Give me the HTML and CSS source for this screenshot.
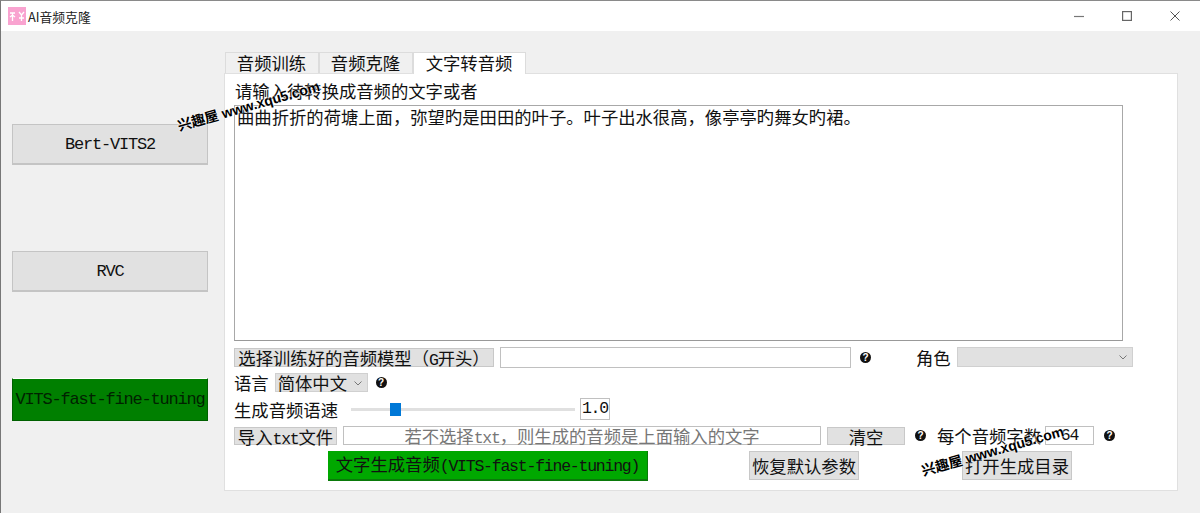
FILE: index.html
```html
<!DOCTYPE html>
<html lang="zh-CN">
<head>
  <meta charset="UTF-8">
  <title>AI音频克隆</title>
  <link rel="stylesheet" href="styles.css">
</head>
<body>
  <div class="window">
    <div class="titlebar">
      <svg class="app-icon" width="18" height="18" viewBox="0 0 18 18">
        <rect width="18" height="18" fill="#f9a3d0"/>
        <path d="M2 6h5M4.500 6v8M2 10l2.500-2 2.500 2M11 5l2.500 3 2.500-3M13.500 8v6M11 11h5" stroke="#fff" stroke-width="1.300" fill="none"/>
      </svg>
      <span class="app-title">AI音频克隆</span>
      <div class="win-controls">
        <svg width="10" height="10" viewBox="0 0 10 10"><path d="M0 5.500h10" stroke="#777" stroke-width="1.200"/></svg>
        <svg width="10" height="10" viewBox="0 0 10 10"><rect x=".6" y=".6" width="8.800" height="8.800" fill="none" stroke="#666" stroke-width="1.200"/></svg>
        <svg width="10" height="10" viewBox="0 0 10 10"><path d="M.5.500l9 9M9.500.500l-9 9" stroke="#555" stroke-width="1"/></svg>
      </div>
    </div>

    <div class="content">
      <div class="sidebar">
        <button class="side-btn">Bert-VITS2</button>
        <button class="side-btn">RVC</button>
        <button class="side-btn side-active">VITS-fast-fine-tuning</button>
      </div>

      <div class="main">
        <div class="tabs">
          <div class="tab">音频训练</div>
          <div class="tab">音频克隆</div>
          <div class="tab tab-active">文字转音频</div>
        </div>
        <div class="panel">
          <div class="prompt">请输入待转换成音频的文字或者</div>
          <div class="textbox">曲曲折折的荷塘上面，弥望旳是田田的叶子。叶子出水很高，像亭亭旳舞女旳裙。</div>

          <div class="row row-model">
            <button class="btn btn-model">选择训练好的音频模型（<span class="lat">G</span>开头）</button>
            <div class="input input-model"></div>
            <span class="help">?</span>
            <span class="role-label">角色</span>
            <div class="select select-role"><svg class="chev" width="8" height="5" viewBox="0 0 8 5"><path d="M.5.500l3.500 3.500 3.500-3.500" fill="none" stroke="#777"/></svg></div>
          </div>

          <div class="row row-lang">
            <span>语言</span>
            <div class="select select-lang">简体中文<svg class="chev" width="8" height="5" viewBox="0 0 8 5"><path d="M.5.500l3.500 3.500 3.500-3.500" fill="none" stroke="#777"/></svg></div>
            <span class="help">?</span>
          </div>

          <div class="row row-speed">
            <span>生成音频语速</span>
            <div class="slider"><div class="slider-handle"></div></div>
            <div class="input input-speed lat">1.0</div>
          </div>

          <div class="row row-txt">
            <button class="btn btn-import">导入<span class="lat">txt</span>文件</button>
            <div class="input input-txt">若不选择<span class="lat">txt</span>，则生成的音频是上面输入的文字</div>
            <button class="btn btn-clear">清空</button>
            <span class="help">?</span>
            <span class="count-label">每个音频字数</span>
            <div class="input input-count lat">64</div>
            <span class="help">?</span>
          </div>

          <div class="row row-actions">
            <button class="btn btn-generate">文字生成音频<span class="lat">(VITS-fast-fine-tuning)</span></button>
            <button class="btn btn-reset">恢复默认参数</button>
            <button class="btn btn-open">打开生成目录</button>
          </div>
        </div>
      </div>
    </div>
  </div>

  <div class="watermark wm-top">兴趣屋 www.xqu5.com</div>
  <div class="watermark wm-bottom">兴趣屋 www.xqu5.com</div>
</body>
</html>
```

FILE: styles.css
```css
* {
  box-sizing: border-box;
}

html, body {
  margin: 0;
  height: 100%;
  overflow: hidden;
}

body {
  font-family: "Noto Sans CJK SC", sans-serif;
  font-size: 17.33px;
  color: #111;
}

.window {
  height: 513px;
  display: flex;
  flex-direction: column;
  border-top: 1px solid #8a8a8a;
  border-left: 1px solid #777;
  background-color: #f0f0f0;
}

.titlebar {
  height: 30px;
  flex-shrink: 0;
  display: flex;
  align-items: center;
  padding-left: 7px;
  background-color: #fff;
}

.app-title {
  margin-left: 2px;
  font-size: 12.800px;
  color: #222;
}

.win-controls {
  margin-left: auto;
  display: flex;
  gap: 38px;
  padding-right: 20px;
}

.content {
  flex: 1;
  display: flex;
}

.sidebar {
  width: 223px;
  flex-shrink: 0;
  padding: 93px 0 0 11px;
  display: flex;
  flex-direction: column;
  align-items: flex-start;
  gap: 86px;
}

button {
  font-family: inherit;
  font-size: inherit;
  color: inherit;
  margin: 0;
  padding: 0;
  line-height: 1;
  white-space: nowrap;
}

.lat {
  font-family: "Liberation Mono", monospace;
  font-size: 16.500px;
  letter-spacing: -1.230px;
}

.side-btn {
  width: 196px;
  height: 41px;
  font-family: "Liberation Mono", monospace;
  font-size: 17px;
  letter-spacing: -1.200px;
  background-color: #e1e1e1;
  border: 1px solid #c4c4c4;
  border-width: 1px 1px 2px 1px;
}

.side-active {
  height: 43px;
  background-color: #007f00;
  border: 1px solid #006000;
  border-top-color: #fff;
  color: #020;
}

.main {
  width: 954px;
  padding-top: 21px;
}

.tabs {
  display: flex;
  height: 21px;
  padding-left: 1px;
}

.tab {
  width: 94px;
  height: 21px;
  padding-right: 1px;
  text-align: center;
  line-height: 19px;
  border: 1px solid #dcdcdc;
  border-bottom: none;
  background-color: #f0f0f0;
}

.tab-active {
  width: 113px;
  height: 22px;
  background-color: #fff;
  position: relative;
  z-index: 1;
}

.panel {
  height: 418px;
  padding: 0 9px;
  background-color: #fff;
  border: 1px solid #e0e0e0;
}

.prompt {
  height: 31px;
  line-height: 33px;
  padding-left: 1px;
}

.textbox {
  width: 889px;
  height: 236px;
  padding: 0 2px;
  line-height: 21px;
  border: 1px solid #a8a8a8;
  border-bottom-color: #999;
}

.row {
  display: flex;
  align-items: center;
  white-space: nowrap;
}

.btn {
  background-color: #e1e1e1;
  border: 1px solid #c8c8c8;
}

.input {
  background-color: #fff;
  border: 1px solid #c0c0c0;
}

.help {
  width: 11px;
  height: 11px;
  border-radius: 50%;
  background-color: #111;
  color: #fff;
  font-family: "Liberation Sans", sans-serif;
  font-size: 10px;
  font-weight: bold;
  line-height: 11px;
  text-align: center;
  flex-shrink: 0;
}

.select {
  position: relative;
  background-color: #e1e1e1;
  border: 1px solid #d0d0d0;
}

.chev {
  position: absolute;
  right: 5px;
  top: 7px;
}

.row-model {
  height: 20px;
  margin-top: 6px;
}

.btn-model {
  width: 260px;
  height: 19px;
}

.input-model {
  width: 351px;
  height: 21px;
  margin-left: 6px;
}

.row-model .help {
  margin-left: 9px;
}

.role-label {
  margin-left: 45px;
}

.select-role {
  width: 176px;
  height: 20px;
  margin-left: 6px;
}

.row-lang {
  height: 19px;
  margin-top: 6px;
}

.select-lang {
  width: 93px;
  height: 19px;
  margin-left: 6px;
  padding-left: 2px;
  line-height: 17px;
  text-align: left;
}

.row-lang .help {
  margin-left: 8px;
}

.row-speed {
  height: 22px;
  margin-top: 6px;
}

.slider {
  position: relative;
  width: 224px;
  height: 3px;
  margin-left: 13px;
  background-color: #e0e0e0;
}

.slider-handle {
  position: absolute;
  left: 39px;
  top: -5px;
  width: 11px;
  height: 13px;
  background-color: #0078d7;
}

.input-speed {
  width: 30px;
  height: 22px;
  margin-left: 5px;
  line-height: 20px;
  text-align: center;
}

.row-txt {
  height: 19px;
  margin-top: 6px;
}

.btn-import {
  width: 103px;
  height: 18px;
}

.input-txt {
  width: 478px;
  height: 19px;
  margin-left: 6px;
  line-height: 17px;
  text-align: center;
  color: #777;
}

.btn-clear {
  width: 78px;
  height: 18px;
  margin-left: 6px;
}

.btn-clear + .help {
  margin-left: 10px;
}

.count-label {
  margin-left: 11px;
}

.input-count {
  width: 49px;
  height: 19px;
  margin-left: 4px;
  line-height: 17px;
  text-align: center;
}

.input-count + .help {
  margin-left: 10px;
}

.row-actions {
  height: 30px;
  margin-top: 6px;
  align-items: flex-start;
}

.btn-generate {
  width: 320px;
  height: 30px;
  margin-left: 94px;
  background-color: #00a800;
  border: 1px solid #0a7a0a;
  border-width: 0 1px 2px 0;
}

.btn-reset {
  width: 110px;
  height: 29px;
  margin-left: 101px;
}

.btn-open {
  width: 110px;
  height: 29px;
  margin-left: 103px;
}

.watermark {
  position: absolute;
  font-family: "Liberation Sans", "Noto Sans CJK SC", sans-serif;
  font-size: 14px;
  font-weight: bold;
  line-height: 16px;
  white-space: nowrap;
  color: #000;
  text-shadow: 0 0 2px #fff, 0 0 2px #fff;
  transform: rotate(-16deg);
  transform-origin: left bottom;
}

.wm-top {
  left: 180px;
  top: 118px;
}

.wm-bottom {
  left: 924px;
  top: 463px;
}
```
